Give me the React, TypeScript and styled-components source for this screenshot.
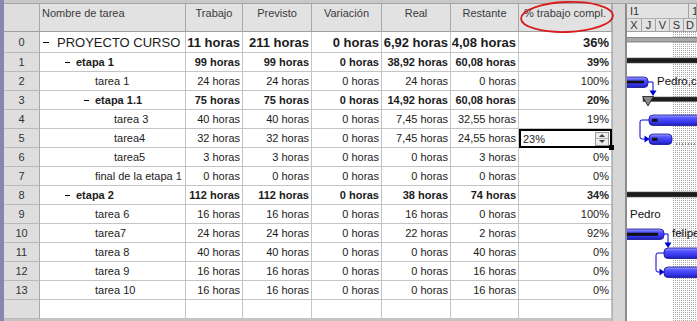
import React from 'react';
import styled, { createGlobalStyle } from 'styled-components';

const GlobalStyle = createGlobalStyle`
  *, *::before, *::after { box-sizing: border-box; }
  html, body { margin: 0; padding: 0; background: #ffffff; }
  body { font-family: 'Liberation Sans', Arial, sans-serif; overflow: hidden; }
`;

const COLS = '36px 146px 57px 69px 70px 69px 68px 93px';

const Screen = styled.div`
  display: flex;
  width: 697px;
  height: 321px;
  overflow: hidden;
  background: #c4c4c4;
`;

const LeftStrip = styled.div`
  width: 4px;
  flex: none;
  background: #8686ae;
`;

const Main = styled.div`
  flex: 1;
  display: flex;
  flex-direction: column;
  min-width: 0;
`;

const TopBand = styled.div`
  height: 4px;
  flex: none;
  background: #c8c8c8;
  border-bottom: 1px solid #a4a4a4;
`;

const Body = styled.div`
  flex: 1;
  display: flex;
  min-height: 0;
`;

const Table = styled.div`
  width: 608px;
  flex: none;
  display: flex;
  flex-direction: column;
`;

const Row = styled.div<{ $height: number; $size?: number; $bold?: boolean }>`
  display: grid;
  grid-template-columns: ${COLS};
  height: ${(p) => p.$height}px;
  flex: none;
  font-size: ${(p) => p.$size ?? 11}px;
  font-weight: ${(p) => (p.$bold ? 700 : 400)};
  background: #ffffff;
  color: #1c1c1c;
`;

const Cell = styled.div<{ $align?: 'left' | 'right' | 'center' }>`
  display: flex;
  align-items: center;
  justify-content: ${(p) =>
    p.$align === 'left' ? 'flex-start' : p.$align === 'center' ? 'center' : 'flex-end'};
  padding: 0 2px;
  border-right: 1px solid #c4c4c4;
  border-bottom: 1px solid #c4c4c4;
  white-space: nowrap;
  min-width: 0;
`;

const RowNumCell = styled(Cell)`
  justify-content: center;
  background: #dedede;
  color: #333333;
  font-size: 11px;
  font-weight: 400;
  border-right-color: #a8a8a8;
  border-bottom-color: #b8b8b8;
`;

const NameCell = styled(Cell)<{ $indent: number }>`
  justify-content: flex-start;
  padding-left: ${(p) => p.$indent}px;
`;

const Toggle = styled.span<{ $width: number; $gap: number }>`
  display: inline-block;
  flex: none;
  width: ${(p) => p.$width}px;
  height: 1px;
  background: #000000;
  margin-right: ${(p) => p.$gap}px;
`;

const HeaderRow = styled(Row)`
  background: #e2e2e2;
  color: #3a3a3a;
`;

const HeaderCell = styled(Cell)`
  position: relative;
  align-items: flex-start;
  padding-top: 3px;
  background: #e2e2e2;
  border-right-color: #a8a8a8;
  border-bottom-color: #a0a0a0;
  overflow: visible;
`;

const Annotation = styled.svg`
  position: absolute;
  left: 0;
  top: -4px;
  width: 96px;
  height: 34px;
  overflow: visible;
  z-index: 3;
  pointer-events: none;
`;

const EditCell = styled(Cell)`
  position: relative;
  justify-content: space-between;
  padding: 0 1px 0 2px;
  border: 2px solid #000000;
  font-weight: 400;
`;

const FillHandle = styled.span`
  position: absolute;
  right: -4px;
  bottom: -4px;
  width: 5px;
  height: 5px;
  background: #000000;
`;

const Spinner = styled.div`
  display: flex;
  flex-direction: column;
  width: 14px;
  height: 14px;
  border: 1px solid #9a9a9a;
  background: #ececec;
`;

const SpinButton = styled.div`
  flex: 1;
  display: flex;
  align-items: center;
  justify-content: center;
  & + & {
    border-top: 1px solid #b4b4b4;
  }
`;

const SpinArrow = styled.span<{ $up?: boolean }>`
  width: 0;
  height: 0;
  border-left: 3px solid transparent;
  border-right: 3px solid transparent;
  ${(p) => (p.$up ? 'border-bottom: 3px solid #404040;' : 'border-top: 3px solid #404040;')}
`;

const Splitter = styled.div`
  width: 15px;
  flex: none;
  background: #d6d6d6;
  border-left: 1px solid #b0b0b0;
  border-right: 2px solid #8c8c8c;
`;

const Gantt = styled.div`
  flex: 1;
  display: flex;
  flex-direction: column;
  min-width: 0;
  overflow: hidden;
  background: #ffffff;
`;

const Timescale = styled.div`
  height: 28px;
  flex: none;
  display: flex;
  flex-direction: column;
  background: #e2e2e2;
  border-bottom: 1px solid #a0a0a0;
  color: #333333;
  font-size: 11px;
`;

const Tier = styled.div<{ $height: number }>`
  display: flex;
  height: ${(p) => p.$height}px;
  flex: none;
`;

const TierCell = styled.div<{ $width?: number; $center?: boolean }>`
  ${(p) => (p.$width ? `width: ${p.$width}px; flex: none;` : 'flex: 1;')}
  display: flex;
  align-items: center;
  justify-content: ${(p) => (p.$center ? 'center' : 'flex-start')};
  padding-left: ${(p) => (p.$center ? 0 : 3)}px;
  border-right: 1px solid #a4a4a4;
  white-space: nowrap;
  overflow: hidden;
`;

const TopTier = styled(Tier)`
  border-bottom: 1px solid #b0b0b0;
`;

const Chart = styled.svg`
  display: block;
  flex: none;
`;

interface TaskRow {
  id: number;
  name: string;
  level: number;
  summary?: boolean;
  editing?: boolean;
  values: string[];
}

const rows: TaskRow[] = [
  { id: 0, name: 'PROYECTO CURSO', level: 0, summary: true, values: ['11 horas', '211 horas', '0 horas', '6,92 horas', '4,08 horas', '36%'] },
  { id: 1, name: 'etapa 1', level: 1, summary: true, values: ['99 horas', '99 horas', '0 horas', '38,92 horas', '60,08 horas', '39%'] },
  { id: 2, name: 'tarea 1', level: 2, values: ['24 horas', '24 horas', '0 horas', '24 horas', '0 horas', '100%'] },
  { id: 3, name: 'etapa 1.1', level: 2, summary: true, values: ['75 horas', '75 horas', '0 horas', '14,92 horas', '60,08 horas', '20%'] },
  { id: 4, name: 'tarea 3', level: 3, values: ['40 horas', '40 horas', '0 horas', '7,45 horas', '32,55 horas', '19%'] },
  { id: 5, name: 'tarea4', level: 3, editing: true, values: ['32 horas', '32 horas', '0 horas', '7,45 horas', '24,55 horas', '23%'] },
  { id: 6, name: 'tarea5', level: 3, values: ['3 horas', '3 horas', '0 horas', '0 horas', '3 horas', '0%'] },
  { id: 7, name: 'final de la etapa 1', level: 2, values: ['0 horas', '0 horas', '0 horas', '0 horas', '0 horas', '0%'] },
  { id: 8, name: 'etapa 2', level: 1, summary: true, values: ['112 horas', '112 horas', '0 horas', '38 horas', '74 horas', '34%'] },
  { id: 9, name: 'tarea 6', level: 2, values: ['16 horas', '16 horas', '0 horas', '16 horas', '0 horas', '100%'] },
  { id: 10, name: 'tarea7', level: 2, values: ['24 horas', '24 horas', '0 horas', '22 horas', '2 horas', '92%'] },
  { id: 11, name: 'tarea 8', level: 2, values: ['40 horas', '40 horas', '0 horas', '0 horas', '40 horas', '0%'] },
  { id: 12, name: 'tarea 9', level: 2, values: ['16 horas', '16 horas', '0 horas', '0 horas', '16 horas', '0%'] },
  { id: 13, name: 'tarea 10', level: 2, values: ['16 horas', '16 horas', '0 horas', '0 horas', '16 horas', '0%'] },
];

const headers = ['Trabajo', 'Previsto', 'Variación', 'Real', 'Restante', '% trabajo compl.'];
const days = ['X', 'J', 'V', 'S', 'D'];

function NameContent({ row }: { row: TaskRow }) {
  const textOffset = 17 + 19 * row.level;
  if (!row.summary) {
    return <NameCell $indent={textOffset}>{row.name}</NameCell>;
  }
  const big = row.level === 0;
  const width = big ? 6 : 5;
  const gap = big ? 8 : 6;
  return (
    <NameCell $indent={textOffset - width - gap} style={big ? { fontWeight: 400 } : undefined}>
      <Toggle $width={width} $gap={gap} />
      {row.name}
    </NameCell>
  );
}

function BlueBar({ x, y, w }: { x: number; y: number; w: number }) {
  return (
    <rect x={x} y={y} width={w} height={10.5} rx={4} fill="url(#blueBar)" stroke="#10109a" strokeWidth={0.8} />
  );
}

function GanttChart() {
  return (
    <Chart width={70} height={289} viewBox="0 0 70 289">
      <defs>
        <pattern id="dots" width="2" height="2" patternUnits="userSpaceOnUse">
          <rect x="0" y="0" width="1" height="1" fill="#a8a8a8" />
        </pattern>
        <linearGradient id="blueBar" x1="0" y1="0" x2="0" y2="1">
          <stop offset="0%" stopColor="#a0a0ff" />
          <stop offset="30%" stopColor="#5252ff" />
          <stop offset="75%" stopColor="#3232e6" />
          <stop offset="100%" stopColor="#1e1eaa" />
        </linearGradient>
      </defs>
      <rect x="45" y="0" width="25" height="289" fill="url(#dots)" />

      {/* proyecto */}
      <rect x="-2" y="5.5" width="80" height="4.5" fill="#a8a8a8" stroke="#707070" strokeWidth={0.8} />
      {/* etapa 1 */}
      <rect x="-2" y="26" width="80" height="5" fill="#1c1c1c" stroke="#5a5a5a" strokeWidth={0.6} />
      {/* tarea 1 */}
      <BlueBar x={-6} y={45} w={27} />
      <rect x="-2" y="48.7" width="19" height="2.6" fill="#111111" />
      <text x="30" y="52.5" fontSize="11.5" fill="#111111" fontFamily="'Liberation Sans', Arial, sans-serif">Pedro,c</text>
      <path d="M21 50 H26 V59" fill="none" stroke="#0000d0" strokeWidth={1} />
      <polygon points="22.5,58.5 29.5,58.5 26,64" fill="#0000d0" />
      {/* etapa 1.1 */}
      <rect x="16" y="65" width="60" height="4.5" fill="#1c1c1c" stroke="#5a5a5a" strokeWidth={0.6} />
      <polygon points="15.5,64.5 26.5,64.5 21,74" fill="#8a8a8a" stroke="#1a1a1a" strokeWidth={0.8} />
      {/* tarea 3 */}
      <BlueBar x={22} y={83} w={56} />
      <rect x="25" y="86.8" width="5.5" height="3" fill="#111111" />
      {/* tarea4 */}
      <BlueBar x={22} y={102} w={23} />
      <rect x="25" y="105.8" width="5.5" height="3" fill="#111111" />
      <line x1="49" y1="112" x2="70" y2="112" stroke="#222222" strokeWidth={1} strokeDasharray="1 2" />
      <path d="M22 88 H15 Q13 88 13 90 V105 Q13 107 15 107 H18" fill="none" stroke="#0000d0" strokeWidth={1} />
      <polygon points="17.5,103.5 17.5,110.5 22.5,107" fill="#0000d0" />
      {/* etapa 2 */}
      <rect x="-2" y="160" width="80" height="5" fill="#1c1c1c" stroke="#5a5a5a" strokeWidth={0.6} />
      {/* tarea 6 */}
      <text x="3" y="185.5" fontSize="11.5" fill="#111111" fontFamily="'Liberation Sans', Arial, sans-serif">Pedro</text>
      {/* tarea7 */}
      <BlueBar x={-6} y={197} w={43} />
      <rect x="-2" y="200.8" width="33" height="3" fill="#111111" />
      <text x="45" y="204.5" fontSize="11.5" fill="#111111" fontFamily="'Liberation Sans', Arial, sans-serif">felipe</text>
      <path d="M37 202 H41 V211" fill="none" stroke="#0000d0" strokeWidth={1} />
      <polygon points="37.5,210.5 44.5,210.5 41,216" fill="#0000d0" />
      {/* tarea 8 */}
      <BlueBar x={37} y={216} w={40} />
      {/* tarea 9 */}
      <BlueBar x={37} y={235} w={40} />
      <path d="M37 221 H31 Q29 221 29 223 V238 Q29 240 31 240 H33" fill="none" stroke="#0000d0" strokeWidth={1} />
      <polygon points="32.5,236.5 32.5,243.5 37.5,240" fill="#0000d0" />
    </Chart>
  );
}

export default function App() {
  return (
    <>
      <GlobalStyle />
      <Screen>
        <LeftStrip />
        <Main>
          <TopBand />
          <Body>
            <Table>
              <HeaderRow $height={28}>
                <HeaderCell style={{ background: '#dedede' }} />
                <HeaderCell $align="left">Nombre de tarea</HeaderCell>
                {headers.map((h, i) => (
                  <HeaderCell key={h} $align="center">
                    {h}
                    {i === headers.length - 1 && (
                      <Annotation viewBox="0 0 96 34">
                        <ellipse
                          cx="48"
                          cy="17"
                          rx="46"
                          ry="15"
                          fill="none"
                          stroke="#d81c1c"
                          strokeWidth={1.8}
                          transform="rotate(-2 48 17)"
                        />
                      </Annotation>
                    )}
                  </HeaderCell>
                ))}
              </HeaderRow>

              {rows.map((row) => (
                <Row
                  key={row.id}
                  $height={row.id === 0 ? 21 : 19}
                  $size={row.id === 0 ? 13 : 11}
                  $bold={row.summary}
                >
                  <RowNumCell>{row.id}</RowNumCell>
                  <NameContent row={row} />
                  {row.values.map((v, i) =>
                    row.editing && i === row.values.length - 1 ? (
                      <EditCell key={i}>
                        {v}
                        <Spinner>
                          <SpinButton>
                            <SpinArrow $up />
                          </SpinButton>
                          <SpinButton>
                            <SpinArrow />
                          </SpinButton>
                        </Spinner>
                        <FillHandle />
                      </EditCell>
                    ) : (
                      <Cell key={i}>{v}</Cell>
                    )
                  )}
                </Row>
              ))}

              <Row $height={19}>
                <RowNumCell />
                <Cell />
                <Cell />
                <Cell />
                <Cell />
                <Cell />
                <Cell />
                <Cell />
              </Row>
            </Table>

            <Splitter />

            <Gantt>
              <Timescale>
                <TopTier $height={15}>
                  <TierCell $width={62}>I1</TierCell>
                  <TierCell>1</TierCell>
                </TopTier>
                <Tier $height={12}>
                  {days.map((d, i) => (
                    <TierCell key={d} $center $width={i === 0 ? 15 : i === days.length - 1 ? undefined : 14}>
                      {d}
                    </TierCell>
                  ))}
                </Tier>
              </Timescale>
              <GanttChart />
            </Gantt>
          </Body>
        </Main>
      </Screen>
    </>
  );
}
